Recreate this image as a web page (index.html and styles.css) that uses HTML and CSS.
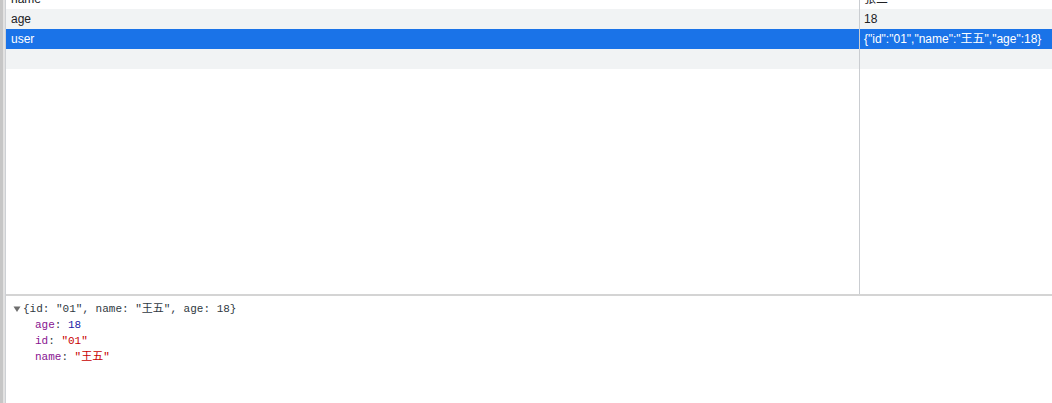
FILE: index.html
```html
<!DOCTYPE html>
<html>
<head>
<meta charset="utf-8">
<link rel="stylesheet" href="styles.css">
</head>
<body>
<div class="page">
  <div class="edge"><div class="edge-dark"></div><div class="edge-light"></div></div>
  <div class="main">
    <div class="table">
      <div class="row"><div class="key">name</div><div class="val">张三</div></div>
      <div class="row alt"><div class="key">age</div><div class="val">18</div></div>
      <div class="row sel"><div class="key">user</div><div class="val">{"id":"01","name":"王五","age":18}</div></div>
      <div class="row alt"><div class="key"></div><div class="val"></div></div>
      <div class="row filler"><div class="key"></div><div class="val"></div></div>
    </div>
    <div class="console">
      <div class="line summary"><svg class="tri" width="8" height="8" viewBox="0 0 8 8"><path d="M0.5 1.5 L7.5 1.5 L4 7 Z" fill="#6e6e6e"/></svg>{id: "01", name: "王五", age: 18}</div>
      <div class="line prop"><span class="k">age</span>: <span class="n">18</span></div>
      <div class="line prop"><span class="k">id</span>: <span class="s">"01"</span></div>
      <div class="line prop"><span class="k">name</span>: <span class="s">"王五"</span></div>
    </div>
  </div>
</div>
</body>
</html>
```
FILE: styles.css
```css
html, body {
  margin: 0;
  padding: 0;
  background: #fff;
  overflow: hidden;
}
.page {
  display: flex;
  width: 1052px;
  height: 403px;
  overflow: hidden;
}
.edge {
  display: flex;
  width: 6px;
  flex: none;
  border-right: 1px solid #cdd0d4;
  box-sizing: border-box;
}
.edge-dark {
  width: 3px;
  background: #c6c6c6;
}
.edge-light {
  width: 2px;
  background: #e2e2e2;
}
.main {
  flex: 1;
  display: flex;
  flex-direction: column;
  min-width: 0;
}
.table {
  display: flex;
  flex-direction: column;
  height: 307px;
  margin-top: -11px;
  border-bottom: 2px solid #d4d4d4;
  box-sizing: border-box;
  font-family: "Segoe UI", "Liberation Sans", "Noto Sans CJK SC", sans-serif;
  font-size: 12px;
  color: #202124;
}
.row {
  display: flex;
  height: 20px;
  flex: none;
}
.row.alt {
  background: #f1f3f4;
}
.row.sel {
  background: #1a73e8;
  color: #fff;
}
.row.filler {
  flex: 1;
}
.key {
  width: 854px;
  flex: none;
  padding-left: 5px;
  box-sizing: border-box;
  border-right: 1px solid #cacdd1;
  line-height: 20px;
  white-space: nowrap;
}
.val {
  flex: 1;
  padding-left: 4px;
  line-height: 20px;
  white-space: nowrap;
  overflow: hidden;
}
.console {
  flex: 1;
  padding: 5px 0 0 7px;
  font-family: "Liberation Mono", "DejaVu Sans Mono", "Noto Sans CJK SC", monospace;
  font-size: 11px;
  color: #303942;
}
.line {
  height: 16px;
  line-height: 16px;
  white-space: pre;
}
.summary {
  display: flex;
  align-items: center;
}
.tri {
  margin-right: 2px;
}
.prop {
  padding-left: 22px;
}
.k {
  color: #881391;
}
.n {
  color: #1a1aa6;
}
.s {
  color: #c80000;
}
```
